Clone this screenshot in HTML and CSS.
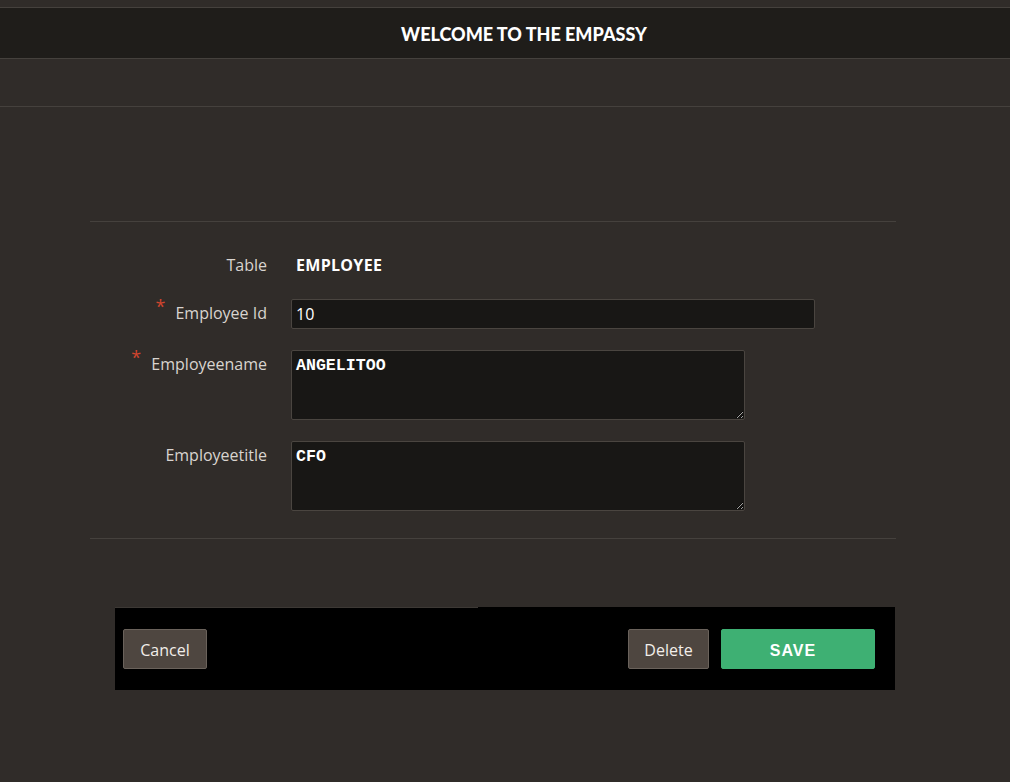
FILE: index.html
```html
<!DOCTYPE html>
<html>
<head>
<meta charset="utf-8">
<link rel="stylesheet" href="styles.css">
</head>
<body>
<div class="page">
  <div class="topstrip"></div>
  <header class="header"><h1 class="title">WELCOME TO THE EMPASSY</h1></header>
  <div class="band"></div>
  <main class="main">
    <section class="form">
      <div class="row row-table">
        <div class="label">Table</div>
        <div class="field"><span class="tablename">EMPLOYEE</span></div>
      </div>
      <div class="row row-id">
        <div class="label"><span class="req">*</span>Employee Id</div>
        <div class="field"><input class="input" type="text" value="10"></div>
      </div>
      <div class="row row-ta">
        <div class="label"><span class="req">*</span>Employeename</div>
        <div class="field"><textarea class="textarea">ANGELITOO</textarea></div>
      </div>
      <div class="row row-ta">
        <div class="label">Employeetitle</div>
        <div class="field"><textarea class="textarea">CFO</textarea></div>
      </div>
    </section>
    <div class="footer">
      <button class="btn btn-grey">Cancel</button>
      <div class="spacer"></div>
      <button class="btn btn-grey btn-delete">Delete</button>
      <button class="btn btn-save">SAVE</button>
    </div>
  </main>
</div>
</body>
</html>
```
FILE: styles.css
```css
* { box-sizing: border-box; }
html, body { margin: 0; padding: 0; }
body {
  background: #302c29;
  font-family: "Open Sans", "Noto Sans", sans-serif;
  color: #e2dedb;
  width: 1010px;
  height: 782px;
  overflow: hidden;
}
.topstrip { height: 8px; border-bottom: 1px solid #45413d; }
.header {
  height: 51px;
  background: #1f1d1a;
  border-bottom: 1px solid #45413d;
  display: flex;
  align-items: center;
  justify-content: center;
}
.title {
  margin: 0;
  font-family: "Lato", "Open Sans", sans-serif;
  font-weight: 900;
  font-size: 18px;
  color: #ffffff;
  padding-left: 38px;
  padding-top: 1px;
}
.band { height: 48px; border-bottom: 1px solid #45413d; }
.main { padding: 114px 0 0 90px; }
.form {
  width: 806px;
  border-top: 1px solid #45413d;
  border-bottom: 1px solid #45413d;
  padding: 28px 0 27px 0;
}
.row { display: flex; align-items: flex-start; }
.label {
  width: 177px;
  text-align: right;
  font-size: 16px;
  color: #d9d4cf;
  position: relative;
}
.req {
  color: #d0452e;
  font-size: 18px;
  position: absolute;
  margin-left: -20px;
  margin-top: -8px;
}
.field { margin-left: 24px; }
.row-table { height: 29px; align-items: center; margin-bottom: 20px; }
.tablename {
  font-family: "Open Sans", sans-serif;
  font-weight: 700;
  font-size: 16px;
  color: #ffffff;
  padding-left: 5px;
  letter-spacing: 0.3px;
}
.row-id { margin-bottom: 21px; }
.row-id .label { padding-top: 3px; }
.input {
  width: 524px;
  height: 30px;
  background: #181715;
  border: 1px solid #4a4540;
  border-radius: 2px;
  color: #ffffff;
  font-family: "Open Sans", sans-serif;
  font-size: 16px;
  padding: 0 4px;
  outline: none;
}
.row-ta { margin-bottom: 21px; }
.row-ta:last-child { margin-bottom: 0; }
.row-ta .label { padding-top: 3px; }
.textarea {
  display: block;
  width: 454px;
  height: 70px;
  background: #181715;
  border: 1px solid #4a4540;
  border-radius: 2px;
  color: #ffffff;
  font-family: "Liberation Mono", "Courier New", monospace;
  font-weight: 700;
  font-size: 16.6px;
  line-height: 18px;
  padding: 6px 4px;
  resize: both;
  outline: none;
}
.footer {
  margin: 68px 0 0 25px;
  width: 780px;
  height: 83px;
  background: linear-gradient(to right, #3d3935 0, #3d3935 363px, #000 363px) top left / 100% 1px no-repeat, #000;
  display: flex;
  align-items: flex-start;
  padding: 22px 20px 0 8px;
}
.spacer { flex: 1; }
.btn {
  height: 40px;
  border-radius: 2px;
  font-size: 16px;
  cursor: pointer;
}
.btn-grey {
  background: #4e4640;
  border: 1px solid #6a625b;
  color: #f2eeea;
  font-family: "Open Sans", sans-serif;
  width: 84px;
  padding: 2px 0 0 0;
}
.btn-delete { width: 81px; margin-right: 12px; }
.btn-save {
  width: 154px;
  background: #3eb073;
  border: 1px solid #3eb073;
  color: #ffffff;
  font-family: "Liberation Sans", Arial, sans-serif;
  font-weight: 700;
  font-size: 16px;
  letter-spacing: 1px;
  padding: 4px 10px 0 0;
}
```
